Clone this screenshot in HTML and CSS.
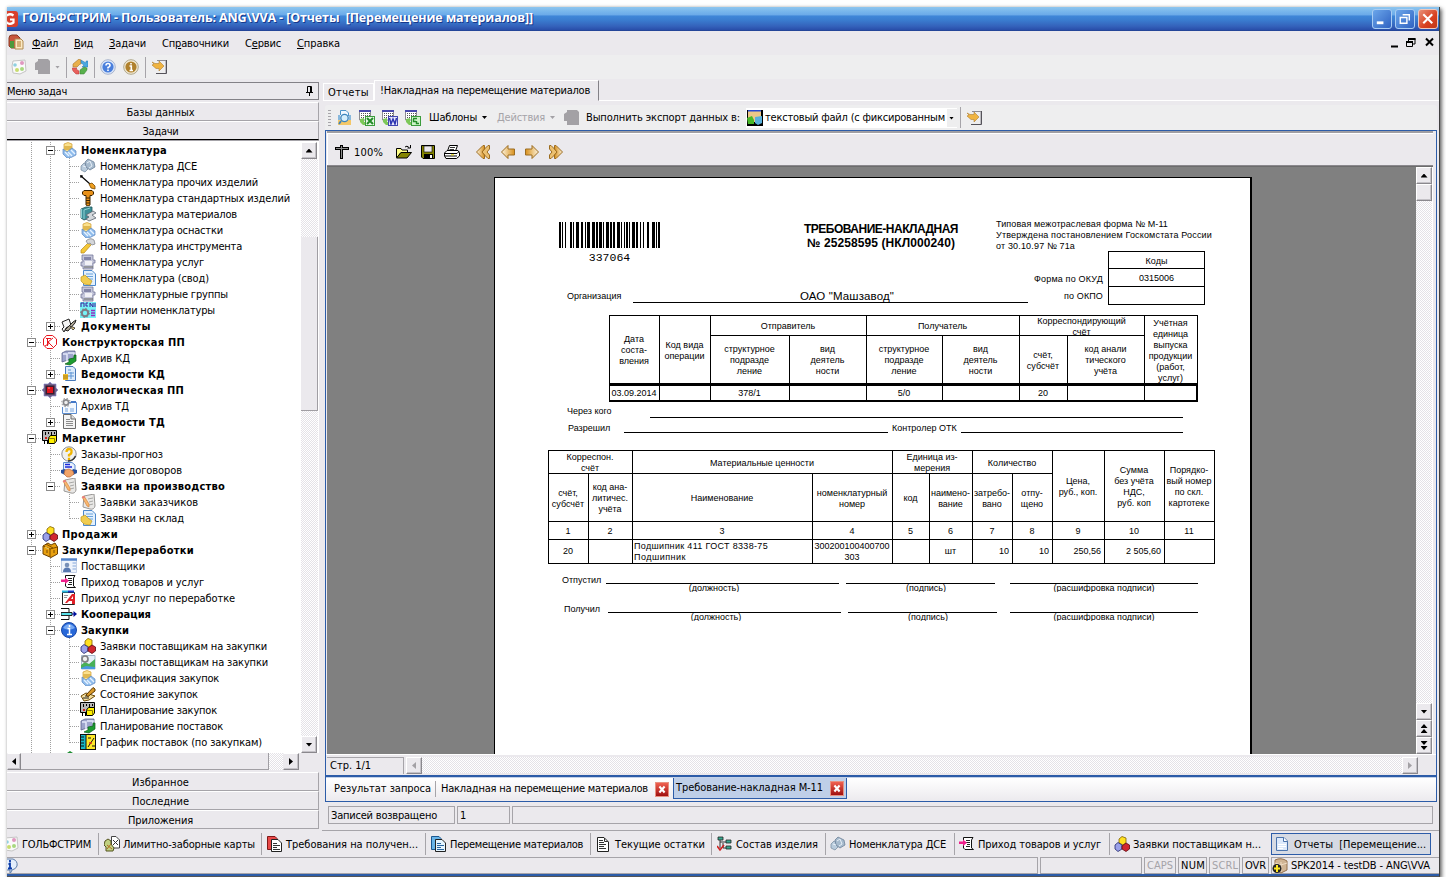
FILE: index.html
```html
<!DOCTYPE html>
<html lang="ru">
<head>
<meta charset="utf-8">
<title>ГОЛЬФСТРИМ</title>
<link rel="stylesheet" href="styles.css">
</head>
<body>
<svg class="defs" width="0" height="0">
<defs>
<linearGradient id="gold" x1="0" x2="1"><stop offset="0" stop-color="#fdf3dc"/><stop offset="1" stop-color="#d8901c"/></linearGradient>
<linearGradient id="gold2" x1="1" x2="0"><stop offset="0" stop-color="#fdf3dc"/><stop offset="1" stop-color="#d8901c"/></linearGradient>
<symbol id="app" viewBox="0 0 16 16"><rect width="16" height="16" rx="3" fill="#d8402c"/><path d="M11.5 4.5Q8 2 4.800 4.500T5 11.800Q8 14 11.500 11.500V8.500H8" fill="none" stroke="#fff" stroke-width="2.200"/></symbol>
<symbol id="appdoc" viewBox="0 0 16 16"><path d="M1 4Q1 1 4 1H9L12 4V14H3L1 12Z" fill="#c8563c" stroke="#8a3a22"/><path d="M2 7H6V14H2Z" fill="#4c9a3c"/><path d="M7 5H13L15 7V15H7Z" fill="#fbe9c4" stroke="#b08a50"/><path d="M9 8H13M9 10H13M9 12H13" stroke="#b0782c"/></symbol>
<symbol id="palette" viewBox="0 0 16 16"><path d="M2 2L14 1L15 12L9 15L2 14L1 7Z" fill="#fafafa" stroke="#c4c4c4"/><circle cx="4" cy="6" r="1.800" fill="#8fd0e0"/><circle cx="11" cy="4" r="2" fill="#e098c0"/><circle cx="6" cy="11" r="2" fill="#c8dc70"/><circle cx="11" cy="10" r="2" fill="#a8d880"/></symbol>
<symbol id="shade" viewBox="0 0 16 16"><path d="M4 0H14L16 2V15H4V11H1V4L4 2Z" fill="#a3a1a5"/></symbol>
<symbol id="recycle" viewBox="0 0 16 16"><path d="M7 0L1 5V8H5L8 5H9L9 1Z" fill="#e8b04c" stroke="#a8762c" stroke-width=".6"/><path d="M9 1L14 4V2H16V8H10L12 6L9 4Z" fill="#4aa8e0" stroke="#2878b0" stroke-width=".5"/><path d="M0 9H5L4 10L7 12V15H4L1 12Z" fill="#e8605c" stroke="#b83838" stroke-width=".5"/><path d="M15 9V11L12 15H8V11L12 8Z" fill="#58b04c" stroke="#388030" stroke-width=".5"/></symbol>
<symbol id="help" viewBox="0 0 16 16"><circle cx="8" cy="8" r="7.300" fill="#dbe7fa" stroke="#a9b4cc"/><circle cx="8" cy="8" r="5.600" fill="#4a7fdc"/><path d="M6 6.500Q6 4.500 8 4.500T10 6.400Q10 7.600 8 8.500V9.500M8 10.500V12" fill="none" stroke="#fff" stroke-width="1.600"/></symbol>
<symbol id="about" viewBox="0 0 16 16"><circle cx="8" cy="8" r="7.300" fill="#f2ead4" stroke="#b0a88c"/><circle cx="8" cy="8" r="5.600" fill="#b0812c"/><path d="M8 4V5.600M6.500 7H8.300V11M6.500 11.500H10" fill="none" stroke="#fff" stroke-width="1.600"/></symbol>
<symbol id="exit" viewBox="0 0 16 16"><path d="M5 1.500H14V14" fill="none" stroke="#8f8d92"/><path d="M14.500 1V14.500H4" fill="none" stroke="#55535a"/><path d="M0 3L3 4.500H7V2L12 7L7 12V9.500H4L0 6L2 5Z" fill="#f0b440" stroke="#b08030" stroke-width=".6"/></symbol>
<symbol id="can" viewBox="0 0 16 16"><path d="M3 2Q7-1 11 2V11H3Z" fill="#fbe08c" stroke="#d09c30" stroke-width=".7"/><path d="M3 4H11V8H3Z" fill="#e0b850"/><path d="M2 7L6 10L11 6L15 9V13L9 16H6L2 12Z" fill="#8fbcec" stroke="#5c86c0" stroke-width=".7"/><path d="M4 10L8 14M7 10L11 14M10 8L14 12" stroke="#e6f2ff" stroke-width="1.400"/></symbol>
<symbol id="nuts" viewBox="0 0 16 16"><path d="M1 8L4 5L8 7V11L5 14L1 12Z" fill="#b9cbdc" stroke="#71869b" stroke-width=".7"/><path d="M5 4L8 1L14 4L15 9L10 12L6 9Z" fill="#a6bacd" stroke="#61778f" stroke-width=".7"/><path d="M7 5L10 3L12 8L9 10M3 8L6 9" stroke="#e8f0f8" fill="none"/></symbol>
<symbol id="probe" viewBox="0 0 16 16"><path d="M1 2L10 10" stroke="#000" stroke-width="1.200"/><path d="M0 2H3M1 1V4" stroke="#000"/><path d="M9 10L12 9L15 12V15L11 14Z" fill="#f0a020" stroke="#7a4a00" stroke-width=".8"/></symbol>
<symbol id="bolt" viewBox="0 0 16 16"><path d="M4 .5H12L13.500 2V4L12 5.500H10V15L8 16L6 15V5.500H4L2.500 4V2Z" fill="#e89018" stroke="#3c2400"/><path d="M6 8H10M6 10.500H10M6 13H10" stroke="#3c2400"/></symbol>
<symbol id="plates" viewBox="0 0 16 16"><path d="M1 3L6 1L12 1V6L9 8V12L4 14L1 12Z" fill="#3d8f98" stroke="#1f555c" stroke-width=".8"/><path d="M4 4V13M4 4L10 2M1.500 3V12" stroke="#90d0d4"/><path d="M6 9L13 5L16 7L12 9L16 12L9 15L6 13L9 11Z" fill="#d4d8dc" stroke="#5c6470" stroke-width=".8"/></symbol>
<symbol id="hammer" viewBox="0 0 16 16"><path d="M1 12L8 5L11 7L4 15L1 15Z" fill="#f4c838" stroke="#b88818" stroke-width=".7"/><path d="M6 3Q10-1 14 2L15 6L12 7L10 5L8 6Z" fill="#d4d6da" stroke="#84888e" stroke-width=".8"/></symbol>
<symbol id="press" viewBox="0 0 16 16"><path d="M2 1H13V6H15V9H13V15H3V12H1V8H3V6H2Z" fill="#c4c6da" stroke="#74769a" stroke-width=".8"/><path d="M4 3H11V6H4Z" fill="#8486a8"/><path d="M5 8H12M5 10H12" stroke="#fff" stroke-width="1.400"/><path d="M4 13H13" stroke="#63655f"/></symbol>
<symbol id="svod" viewBox="0 0 16 16"><path d="M3.500 .5H12L15.500 4V15.500H3.500Z" fill="#e2f0fd" stroke="#4c88cc"/><path d="M6 4H13M6 6.500H13M6 9H13" stroke="#6aa2dc"/><path d="M1 7L5 5L8 8L12 11L10 15L4 14L1 11Z" fill="#f0cc50" stroke="#c09820" stroke-width=".7"/></symbol>
<symbol id="party" viewBox="0 0 16 16"><rect width="16" height="16" fill="#76f2f6"/><path d="M1 5V1H4V5M8 1H6V4H8M10 5V1L13 5V1M15 1V5" fill="none" stroke="#3c1c9c"/><circle cx="5" cy="11" r="3.200" fill="none" stroke="#7c7c84" stroke-width="2"/><circle cx="5" cy="11" r="4.500" fill="none" stroke="#7c7c84" stroke-dasharray="1.500 2"/><path d="M11 8.500H15M11 11H15M11 13.500H15" stroke="#9030c0" stroke-width="1.300"/></symbol>
<symbol id="docs" viewBox="0 0 16 16"><path d="M1 4L8 1L10 7L5 10L3 14L1 11L3 9Z" fill="#f4f4f4" stroke="#222"/><path d="M4 12L12 4L15 2L14 5L7 13Z" fill="#b0a898" stroke="#222"/><path d="M9 8L14 10L12 12Z" fill="#f4d890" stroke="#222" stroke-width=".8"/></symbol>
<symbol id="kredo" viewBox="0 0 16 16"><path d="M4.500 1.500H10.500L14.500 5V10.500L10.500 14.500H5L1.500 11V5Z" fill="none" stroke="#e8141c"/><path d="M5.500 4V12M11 4L6 8L11 13M4 4.500H9M3 12L8 9" fill="none" stroke="#e8141c"/></symbol>
<symbol id="archk" viewBox="0 0 16 16"><path d="M1 3L5 1H14V10H7L1 12Z" fill="#9da4cc" stroke="#5c628e" stroke-width=".8"/><path d="M2 4H6V11M7 3H13V6" stroke="#e4e8fa" fill="none" stroke-width="1.500"/><path d="M4 14L8 12V9L13 8V5H15V11L9 15Z" fill="#1c9c30" stroke="#0b5c18" stroke-width=".7"/></symbol>
<symbol id="vedk" viewBox="0 0 16 16"><path d="M4.500 .5H12L14.500 3V14.500H4.500Z" fill="#dcebfb" stroke="#4878b8"/><path d="M7 4H10M7 7H13M7 10H13M10 6V13" stroke="#5f95d4"/><path d="M2 8H7V14H2Z" fill="#f0c030"/><path d="M2 10H7M2 12H7" stroke="#a87c10"/></symbol>
<symbol id="tech" viewBox="0 0 16 16"><path d="M8 0L10 2H14V6L16 8L14 10V14H10L8 16L6 14H2V10L0 8L2 6V2H6Z" fill="#6e6088" stroke="#8080c4" stroke-width=".6"/><rect x="3.500" y="3.500" width="9" height="9" fill="#3c1c30"/><rect x="5" y="5" width="6" height="6" fill="#e0141c"/><path d="M6 6H8" stroke="#ff9090"/></symbol>
<symbol id="archt" viewBox="0 0 16 16"><path d="M3.500 4.500H15.500V15.500H1.500V9" fill="#f3f8fe" stroke="#5a8cd0"/><path d="M10 4H15" stroke="#4478c8" stroke-width="2"/><path d="M4 11H7M9 11H13M4 13H7M9 13H13" stroke="#78a4dc"/><circle cx="5" cy="4.500" r="2.600" fill="#eee" stroke="#86868a" stroke-width="1.600"/><circle cx="5" cy="4.500" r="4.200" fill="none" stroke="#86868a" stroke-dasharray="1.500 1.800"/></symbol>
<symbol id="page" viewBox="0 0 16 16"><path d="M2.500 .5H10L14.500 5V14.500H2.500Z" fill="#f4f4f4" stroke="#6c6c6c"/><path d="M10 .5V5H14.500" fill="#ddd" stroke="#6c6c6c"/><path d="M5 5.500H9M5 7.500H12M5 9.500H12M5 11.500H12" stroke="#8c8c8c"/></symbol>
<symbol id="market" viewBox="0 0 16 16"><path d="M.5 .5H14.500V10.500H.5Z" fill="#b8b8b8" stroke="#000"/><path d="M3.500 2V5M6.500 2V4M9.500 2V5M12.500 2V4M2.500 14V10M5.500 14V10" stroke="#000"/><path d="M3 7.500H5M3 8.500H5" stroke="#d02020"/><path d="M6.500 8L8.500 5.500H14.500V11L12.500 13.500H6.500Z" fill="#fff000" stroke="#000"/><path d="M6.500 8.500H12.500V13" fill="none" stroke="#8c7c00"/></symbol>
<symbol id="quest" viewBox="0 0 16 16"><circle cx="8" cy="8" r="7.200" fill="#f0f0ee" stroke="#8c8c90"/><path d="M14.500 10Q12 15 7 15" stroke="#333" fill="none" stroke-width="1.500"/><path d="M5.500 6Q5.500 3 8.200 3T10.500 6Q10.500 8 8 9V10.500M8 11.800V14" fill="none" stroke="#f0b400" stroke-width="2.300"/></symbol>
<symbol id="deal" viewBox="0 0 16 16"><path d="M2.500 .5H11L14 3V11H2.500Z" fill="#e8f0fc" stroke="#5c8cd0"/><path d="M4 2.500H9M4 5H11" stroke="#1c28d8" stroke-width="1.500"/><path d="M0 8L4 7L6 10L4 13L0 11ZM16 8L12 7L10 10L12 13L16 11Z" fill="#27509c"/><path d="M4 8L8 7L12 9L13 12L9 15H6L3 12Z" fill="#f2a468" stroke="#b8683c" stroke-width=".7"/></symbol>
<symbol id="note" viewBox="0 0 16 16"><path d="M4 2L14 0L15 12Q14 16 10 15L3 13Z" fill="#e9e8e6" stroke="#9a9896"/><path d="M8 5L13 4M9 8L13 7M9 11L13 10" stroke="#a8a8a6"/><path d="M2 3L4 2L9 10V13L7 12Z" fill="#f8b870" stroke="#d07830" stroke-width=".6"/><path d="M2 3L4 2L5 3.500L3 4.500Z" fill="#e87888"/></symbol>
<symbol id="cubes" viewBox="0 0 16 16"><path d="M5 3L8 .5L12 2V7L9 9L5 7Z" fill="#ffe020" stroke="#806000" stroke-width=".8"/><path d="M1 9L4 6.500L8 9V13L4 15.500L1 13Z" fill="#9aa0e8" stroke="#20246c" stroke-width=".8"/><path d="M8 10L12 7L15.500 9V13L12 15.500L8 13Z" fill="#d02830" stroke="#5c0810" stroke-width=".8"/></symbol>
<symbol id="box" viewBox="0 0 16 16"><path d="M1 4L6 1L9 3L13 1L15.500 5V12L9 15.500L1 12Z" fill="#e8a010" stroke="#6c4000"/><path d="M1 4L8 7L15.500 5M8 7V15M4 2L11 6M5 8V11M12 8V11" fill="none" stroke="#7c4c00"/><path d="M3 5L7 7" stroke="#ffe070"/></symbol>
<symbol id="supp" viewBox="0 0 16 16"><path d="M.5 1.500H15.500V14.500H.5Z" fill="#eef3fb" stroke="#c0cde4"/><path d="M0 1.500H16" stroke="#5484cc" stroke-width="2.500"/><circle cx="6" cy="7" r="2.300" fill="#7890b8"/><path d="M2 14Q2 9.500 6 9.500T10 14Z" fill="#5878b0"/><path d="M11.500 5H15M11.500 8H15M11.500 11H15" stroke="#86a8dc"/></symbol>
<symbol id="income" viewBox="0 0 16 16"><path d="M4.500 4V1.500H14L12.500 4V12L14.500 13.500H6L4.500 12V9" fill="#fff" stroke="#111"/><path d="M7 4.500H11M7 6.500H11M8 8.500H11M7 10.500H11" stroke="#222"/><path d="M0 5.500H4V3.500L8 6.800L4 10V8H0Z" fill="#f0208c"/></symbol>
<symbol id="letterA" viewBox="0 0 16 16"><path d="M1.500 2.500H13.500V14.500H1.500Z" fill="#fff" stroke="#222"/><path d="M1 1.500H7" stroke="#28b8e0" stroke-width="2"/><path d="M7 1.500H13" stroke="#1838c8" stroke-width="2"/><path d="M4 13L11 4H14V14H11V11H8L6 13Z" fill="#e02028"/><path d="M10 9L12 6V9Z" fill="#fff"/><path d="M3 5.500H7M3 7.500H6" stroke="#999"/></symbol>
<symbol id="coop" viewBox="0 0 16 16"><path d="M0 2.500H8V13.500H0" fill="none" stroke="#111"/><path d="M0 6.500H11V9.500H0Z" fill="#58e0e8" stroke="#222"/><path d="M11 8H13" stroke="#00109c"/><path d="M12.500 5L16 8L12.500 11Z" fill="#00109c"/></symbol>
<symbol id="info" viewBox="0 0 16 16"><circle cx="8" cy="8" r="7.500" fill="#2868d8" stroke="#1a48a8"/><path d="M2 6Q8-2 14 6Q8 9 2 6Z" fill="#78aaf4"/><path d="M8.500 3V5M6.500 6.500H8.500V12M6 12.500H11" fill="none" stroke="#fff" stroke-width="1.500"/></symbol>
<symbol id="orders" viewBox="0 0 16 16"><path d="M1.500 1.500H15V15H1.500Z" fill="#e4f0fa" stroke="#a4b8cc"/><path d="M1 15V11L5 8L9 10L15 5V15Z" fill="#48b058"/><path d="M1 14L6 12L15 13V15H1Z" fill="#4898e0"/><circle cx="5" cy="5" r="3" fill="#f0f0f0" stroke="#808084" stroke-width="1.700"/></symbol>
<symbol id="state" viewBox="0 0 16 16"><path d="M1 10L6 7L15 10L9 14L4 15Z" fill="#f6e0a0" stroke="#6c4a08"/><path d="M3 12H9M5 10H9" stroke="#222"/><path d="M6 9L13 1.500L15 3V5L8 10.500Z" fill="#d89828" stroke="#5c3800"/></symbol>
<symbol id="chart" viewBox="0 0 16 16"><rect x=".5" y=".5" width="15" height="15" fill="#ffe828" stroke="#111"/><path d="M1 1H6V15H1Z" fill="#18b8c8"/><path d="M1 3H4M1 6H4M1 9H4M1 12H4M6 0V16" stroke="#111"/><path d="M8 13L14 4M8 4H11M12 12H15" stroke="#111"/><path d="M9 9L12 9" stroke="#e03020" stroke-width="1.500"/></symbol>
<symbol id="preview" viewBox="0 0 16 16"><path d="M4.500 5V.5H10L12.500 3V6" fill="#f0f8ff" stroke="#4c94c8"/><path d="M2 5H4V11H2ZM13 5H15V11H13Z" fill="#88b8dc"/><path d="M2 10H15V15H2Z" fill="#f4c868"/><circle cx="8.500" cy="8" r="3.700" fill="#d4eefc" stroke="#3c84bc" stroke-width="1.300"/><path d="M5 11L3 14" stroke="#3c84bc" stroke-width="1.800"/></symbol>
<symbol id="sheet" viewBox="0 0 16 16"><path d="M.5 .5H11.500V10H.5Z" fill="#fff" stroke="#8c8c90"/><path d="M0 1H12" stroke="#4848ac" stroke-width="2"/><path d="M2 3.500H11M2 5.500H11M2 7.500H11" stroke="#555" stroke-dasharray="1 1"/><path d="M1 9L5 8V12H8V15H4L1 12Z" fill="#7cc858"/></symbol>
<symbol id="xls" viewBox="0 0 16 16"><use href="#sheet"/><rect x="6.500" y="6.500" width="9" height="9" fill="#e8f8e4" stroke="#3c9c3c"/><path d="M8 8L14 14M14 8L8 14" stroke="#248c28" stroke-width="2"/></symbol>
<symbol id="doc" viewBox="0 0 16 16"><use href="#sheet"/><rect x="6.500" y="6.500" width="9" height="9" fill="#e8e8fc" stroke="#4448b0"/><path d="M7.500 8L9 14L11 9L13 14L14.500 8" fill="none" stroke="#2c34b0" stroke-width="1.500"/></symbol>
<symbol id="xml" viewBox="0 0 16 16"><use href="#sheet"/><rect x="6.500" y="6.500" width="9" height="9" fill="#d0f4c8" stroke="#3c9c3c"/><path d="M8 8.500H12M8.500 9V11.500H11M11.500 11V13.500H14" fill="none" stroke="#248c28" stroke-width="1.400"/></symbol>
<symbol id="txt" viewBox="0 0 16 16"><rect width="16" height="16" fill="#000"/><path d="M1 1H14V12H1Z" fill="#ecc888"/><path d="M1 0H14V1.500H1Z" fill="#2848d0"/><path d="M0 8L5 6L7 10V14H1Z" fill="#48b828"/><path d="M8 7L15 6V13L11 15L8 13Z" fill="#58b0dc"/></symbol>
<symbol id="zoomcross" viewBox="0 0 16 16"><path d="M0 3H14V6H0ZM5 1H8V15H5Z" fill="#000"/><path d="M1 4.500H13M6.500 2V14" stroke="#8c8c8c"/></symbol>
<symbol id="open" viewBox="0 0 16 16"><path d="M.5 13.500V4.500H5L6 6H11.500V8.500H5L1 13.500" fill="#ffff88" stroke="#000"/><path d="M.5 14L5 8.500H15.500L11 14Z" fill="#848400" stroke="#000"/><path d="M9 3Q11 1 13 3.500M14.500 1V4H11.500" fill="none" stroke="#000"/></symbol>
<symbol id="save" viewBox="0 0 16 16"><path d="M1.500 1.500H14.500V14.500H3L1.500 13Z" fill="#848400" stroke="#000"/><rect x="4" y="2" width="8" height="6" fill="#ebe9ed" stroke="#000" stroke-width=".6"/><rect x="4" y="10" width="9" height="4.500" fill="#000"/><rect x="10" y="11" width="2" height="3" fill="#fff"/></symbol>
<symbol id="print" viewBox="0 0 16 16"><path d="M5.500 1.500H13.500L11.500 7H3.500Z" fill="#fff" stroke="#000"/><path d="M6 3.500H11M5.500 5.500H10" stroke="#000" stroke-width=".8"/><path d="M.5 9L3 6.500H14L15.500 9V12L12.500 14.500H2L.5 12Z" fill="#fff" stroke="#000"/><path d="M1 9.500H13L15 7.500M1 12H13" stroke="#000" fill="none"/><path d="M7 10.800H10" stroke="#e8d800"/></symbol>
<symbol id="prev" viewBox="0 0 16 16"><path d="M8 1.500L1.500 8L8 14.500V11H14.500V5H8Z" fill="url(#gold)" stroke="#9c6c20"/></symbol>
<symbol id="next" viewBox="0 0 16 16"><path d="M8 1.500L14.500 8L8 14.500V11H1.500V5H8Z" fill="url(#gold2)" stroke="#9c6c20"/></symbol>
<symbol id="first" viewBox="0 0 16 16"><path d="M12 1.500L5.500 8L12 14.500H13.500V11L11 8L13.500 5V1.500Z" fill="#ecc070" stroke="#9c6c20"/><path d="M7 1.500L.5 8L7 14.500H8.500V11L6 8L8.500 5V1.500Z" fill="url(#gold)" stroke="#9c6c20"/></symbol>
<symbol id="last" viewBox="0 0 16 16"><path d="M3 1.500L9.500 8L3 14.500H1.500V11L4 8L1.500 5V1.500Z" fill="#ecc070" stroke="#9c6c20"/><path d="M8 1.500L14.500 8L8 14.500H6.500V11L9 8L6.500 5V1.500Z" fill="url(#gold2)" stroke="#9c6c20"/></symbol>
<symbol id="limit" viewBox="0 0 16 16"><path d="M7.500 .5H12L15.500 4V12H7.500Z" fill="#fff" stroke="#444"/><path d="M9 4L14 9M14 4L9 9" stroke="#333"/><path d="M1 5L4 3L7 5V8L10 12L9 15H2V11L0 9Z" fill="#c0d080" stroke="#555420"/><path d="M3 9L8 13M7 8L3 13" stroke="#b06c20"/></symbol>
<symbol id="reqs" viewBox="0 0 16 16"><path d="M.5 .5H8L10 2.500V13.500H.5Z" fill="#e84848" stroke="#801818"/><path d="M4.500 3.500H11L14.500 7V15.500H4.500Z" fill="#fff" stroke="#222"/><path d="M6 7.500H10M6 9.500H13M6 11.500H10M6 13.500H13" stroke="#333"/></symbol>
<symbol id="moves" viewBox="0 0 16 16"><path d="M.5 .5H8L10 2.500V13.500H.5Z" fill="#68b4e8" stroke="#1c5890"/><path d="M4.500 3.500H11L14.500 7V15.500H4.500Z" fill="#e4f4ff" stroke="#222"/><path d="M6 7.500H10M6 9.500H13M6 11.500H10M6 13.500H13" stroke="#2864a0"/></symbol>
<symbol id="rest" viewBox="0 0 16 16"><path d="M1.500 1.500H8L12.500 6V15.500H1.500Z" fill="#fff" stroke="#222"/><path d="M3 4.500H7M3 6.500H8M3 8.500H10M3 10.500H8M3 12.500H10M8.500 2V5.500H12" fill="none" stroke="#333"/></symbol>
<symbol id="struct" viewBox="0 0 16 16"><path d="M1 1H6V4H1ZM9 4H14V7H9ZM9 10H14V13H9Z" fill="#38a890" stroke="#222" stroke-width=".8"/><path d="M3 4V12M3 6H9M6 7V12H9" fill="none" stroke="#333"/><path d="M0 10L3 14L7 9" fill="none" stroke="#d02020" stroke-width="1.600"/></symbol>
<symbol id="report" viewBox="0 0 16 16"><path d="M1.500 1.500H9L12.500 5V14.500H1.500Z" fill="#dce9fb" stroke="#4c74ac"/><path d="M8.500 1.500V5.500H12.500" fill="#fff" stroke="#4c74ac"/><path d="M3 8.500H11M3 10.500H11M3 12.500H8" stroke="#fff"/></symbol>
<symbol id="dbase" viewBox="0 0 16 16"><path d="M3 2Q9-1 15 3V12L9 15L3 12Z" fill="#d0b494" stroke="#94704c"/><path d="M9 4V14M3 5L9 7L15 5" stroke="#f0dcc4" fill="none"/><circle cx="5" cy="10.500" r="4.500" fill="#222"/><path d="M5 7V14M2 10.500H8" stroke="#ffe820" stroke-width="2"/></symbol>
<symbol id="hint" viewBox="0 0 16 16"><path d="M2 1H10Q15 3 14 8Q13 11 9 12L7 16V12H0V1Z" fill="#e4eefc" stroke="#5c7ca8"/><path d="M7 2V4.500M5.500 6H7V10M5 10.500H9" fill="none" stroke="#0c3ca8" stroke-width="1.800"/></symbol>
<symbol id="pin" viewBox="0 0 16 16"><path d="M5.500 3.500H9.500V9.500H5.500ZM8.500 4V9M4 9.500H11M7.500 10V13" fill="none" stroke="#000"/></symbol>
</defs>
</svg>

<div class="win">
  <header class="title">
    <svg class="i appicon"><use href="#app"/></svg>
    <span class="t cap" data-w="511">ГОЛЬФСТРИМ - Пользователь: ANG\VVA - [Отчеты  [Перемещение материалов]]</span>
    <div class="wbtns">
      <span class="wb"><svg viewBox="0 0 19 19"><path d="M4 13.500H11" stroke="#fff" stroke-width="3"/></svg></span>
      <span class="wb"><svg viewBox="0 0 19 19"><path d="M7 5H14V11M4.500 8H11.500V14H4.500Z" fill="none" stroke="#fff" stroke-width="1.500"/></svg></span>
      <span class="wb red"><svg viewBox="0 0 19 19"><path d="M4.500 4.500L14 14M14 4.500L4.500 14" stroke="#fff" stroke-width="2.200"/></svg></span>
    </div>
  </header>

  <nav class="menu">
    <svg class="i"><use href="#appdoc"/></svg>
    <span class="t" data-w="26"><u>Ф</u>айл</span><span class="t" data-w="19"><u>В</u>ид</span><span class="t" data-w="37"><u>З</u>адачи</span><span class="t" data-w="67">Сп<u>р</u>авочники</span><span class="t" data-w="36">С<u>е</u>рвис</span><span class="t" data-w="43"><u>С</u>правка</span>
    <svg class="mdi" viewBox="0 0 44 12"><path d="M0 9.500H7" stroke="#000" stroke-width="2"/><path d="M17.500 4V1.500H24V7H22M15.500 5H21.500V9.500H15.500Z" fill="none" stroke="#000"/><path d="M17 2H24.500M15 5H22" stroke="#000" stroke-width="2"/><path d="M35 1.500L42 8.500M42 1.500L35 8.500" stroke="#000" stroke-width="2"/></svg>
  </nav>

  <div class="tools">
    <svg class="i"><use href="#palette"/></svg>
    <svg class="i m7"><use href="#shade"/></svg>
    <i class="dn off m5"></i>
    <i class="sep m6"></i>
    <svg class="i m5"><use href="#recycle"/></svg>
    <i class="sep m6"></i>
    <svg class="i m5"><use href="#help"/></svg>
    <svg class="i m7"><use href="#about"/></svg>
    <i class="sep m6"></i>
    <svg class="i m6"><use href="#exit"/></svg>
  </div>

  <main class="main">
    <aside class="side">
      <div class="side-head"><span class="t" data-w="60">Меню задач</span><svg class="i"><use href="#pin"/></svg></div>
      <div class="bar"><span class="t" data-w="68">Базы данных</span></div>
      <div class="bar cur"><span class="t" data-w="36">Задачи</span></div>
      <div class="treebox">
        <ul class="tree">
          <li class="b"><i class="v"></i><i class="k"><b class="x m"></b></i><svg class="i"><use href="#can"/></svg><span class="t" data-w="86">Номенклатура</span></li>
          <li><i class="v"></i><i class="v"></i><i class="k"></i><svg class="i"><use href="#nuts"/></svg><span class="t" data-w="97">Номенклатура ДСЕ</span></li>
          <li><i class="v"></i><i class="v"></i><i class="k"></i><svg class="i"><use href="#probe"/></svg><span class="t" data-w="158">Номенклатура прочих изделий</span></li>
          <li><i class="v"></i><i class="v"></i><i class="k"></i><svg class="i"><use href="#bolt"/></svg><span class="t" data-w="190">Номенклатура стандартных изделий</span></li>
          <li><i class="v"></i><i class="v"></i><i class="k"></i><svg class="i"><use href="#plates"/></svg><span class="t" data-w="137">Номенклатура материалов</span></li>
          <li><i class="v"></i><i class="v"></i><i class="k"></i><svg class="i"><use href="#can"/></svg><span class="t" data-w="123">Номенклатура оснастки</span></li>
          <li><i class="v"></i><i class="v"></i><i class="k"></i><svg class="i"><use href="#hammer"/></svg><span class="t" data-w="142">Номенклатура инструмента</span></li>
          <li><i class="v"></i><i class="v"></i><i class="k"></i><svg class="i"><use href="#press"/></svg><span class="t" data-w="104">Номенклатура услуг</span></li>
          <li><i class="v"></i><i class="v"></i><i class="k"></i><svg class="i"><use href="#svod"/></svg><span class="t" data-w="109">Номенклатура (свод)</span></li>
          <li><i class="v"></i><i class="v"></i><i class="k"></i><svg class="i"><use href="#press"/></svg><span class="t" data-w="128">Номенклатурные группы</span></li>
          <li><i class="v"></i><i class="v"></i><i class="k l"></i><svg class="i"><use href="#party"/></svg><span class="t" data-w="115">Партии номенклатуры</span></li>
          <li class="b"><i class="v"></i><i class="k l"><b class="x"></b></i><svg class="i"><use href="#docs"/></svg><span class="t" data-w="70">Документы</span></li>
          <li class="b"><i class="k"><b class="x m"></b></i><svg class="i"><use href="#kredo"/></svg><span class="t" data-w="123">Конструкторская ПП</span></li>
          <li><i class="v"></i><i class="k"></i><svg class="i"><use href="#archk"/></svg><span class="t" data-w="49">Архив КД</span></li>
          <li class="b"><i class="v"></i><i class="k l"><b class="x"></b></i><svg class="i"><use href="#vedk"/></svg><span class="t" data-w="84">Ведомости КД</span></li>
          <li class="b"><i class="k"><b class="x m"></b></i><svg class="i"><use href="#tech"/></svg><span class="t" data-w="122">Технологическая ПП</span></li>
          <li><i class="v"></i><i class="k"></i><svg class="i"><use href="#archt"/></svg><span class="t" data-w="48">Архив ТД</span></li>
          <li class="b"><i class="v"></i><i class="k l"><b class="x"></b></i><svg class="i"><use href="#page"/></svg><span class="t" data-w="84">Ведомости ТД</span></li>
          <li class="b"><i class="k"><b class="x m"></b></i><svg class="i"><use href="#market"/></svg><span class="t" data-w="64">Маркетинг</span></li>
          <li><i class="v"></i><i class="k"></i><svg class="i"><use href="#quest"/></svg><span class="t" data-w="82">Заказы-прогноз</span></li>
          <li><i class="v"></i><i class="k"></i><svg class="i"><use href="#deal"/></svg><span class="t" data-w="101">Ведение договоров</span></li>
          <li class="b"><i class="v"></i><i class="k l"><b class="x m"></b></i><svg class="i"><use href="#note"/></svg><span class="t" data-w="144">Заявки на производство</span></li>
          <li><i class="v"></i><i></i><i class="k"></i><svg class="i"><use href="#note"/></svg><span class="t" data-w="98">Заявки заказчиков</span></li>
          <li><i class="v"></i><i></i><i class="k l"></i><svg class="i"><use href="#svod"/></svg><span class="t" data-w="84">Заявки на склад</span></li>
          <li class="b"><i class="k"><b class="x"></b></i><svg class="i"><use href="#cubes"/></svg><span class="t" data-w="56">Продажи</span></li>
          <li class="b"><i class="k"><b class="x m"></b></i><svg class="i"><use href="#box"/></svg><span class="t" data-w="132">Закупки/Переработки</span></li>
          <li><i class="v"></i><i class="k"></i><svg class="i"><use href="#supp"/></svg><span class="t" data-w="64">Поставщики</span></li>
          <li><i class="v"></i><i class="k"></i><svg class="i"><use href="#income"/></svg><span class="t" data-w="123">Приход товаров и услуг</span></li>
          <li><i class="v"></i><i class="k"></i><svg class="i"><use href="#letterA"/></svg><span class="t" data-w="154">Приход услуг по переработке</span></li>
          <li class="b"><i class="v"></i><i class="k"><b class="x"></b></i><svg class="i"><use href="#coop"/></svg><span class="t" data-w="70">Кооперация</span></li>
          <li class="b"><i class="v"></i><i class="k"><b class="x m"></b></i><svg class="i"><use href="#info"/></svg><span class="t" data-w="48">Закупки</span></li>
          <li><i class="v"></i><i class="v"></i><i class="k"></i><svg class="i"><use href="#cubes"/></svg><span class="t" data-w="167">Заявки поставщикам на закупки</span></li>
          <li><i class="v"></i><i class="v"></i><i class="k"></i><svg class="i"><use href="#orders"/></svg><span class="t" data-w="168">Заказы поставщикам на закупки</span></li>
          <li><i class="v"></i><i class="v"></i><i class="k"></i><svg class="i"><use href="#can"/></svg><span class="t" data-w="119">Спецификация закупок</span></li>
          <li><i class="v"></i><i class="v"></i><i class="k"></i><svg class="i"><use href="#state"/></svg><span class="t" data-w="98">Состояние закупок</span></li>
          <li><i class="v"></i><i class="v"></i><i class="k"></i><svg class="i"><use href="#market"/></svg><span class="t" data-w="117">Планирование закупок</span></li>
          <li><i class="v"></i><i class="v"></i><i class="k"></i><svg class="i"><use href="#archk"/></svg><span class="t" data-w="123">Планирование поставок</span></li>
          <li><i class="v"></i><i class="v"></i><i class="k l"></i><svg class="i"><use href="#chart"/></svg><span class="t" data-w="162">График поставок (по закупкам)</span></li>
          <li><i class="v"></i><i class="v"></i><svg class="i" viewBox="0 0 16 16"><path d="M6 3L9 1L12 3Z" fill="#1c8c30"/></svg></li>
        </ul>
        <div class="vsb"><span class="sb"><i class="up"></i></span><span class="fill a"></span><span class="thumb"></span><span class="fill"></span><span class="sb"><i class="down"></i></span></div>
      </div>
      <div class="hsb"><span class="sb flat"><i class="left"></i></span><span class="thumb"></span><span class="fill"></span><span class="sb flat"><i class="right"></i></span></div>
      <div class="bar b2"><span class="t" data-w="57">Избранное</span></div>
      <div class="bar b2"><span class="t" data-w="57">Последние</span></div>
      <div class="bar b2"><span class="t" data-w="65">Приложения</span></div>
    </aside>

    <section class="work">
      <div class="tabs">
        <span class="tab"><span class="t" data-w="41">Отчеты</span></span>
        <span class="tab on"><span class="t" data-w="210">!Накладная на перемещение материалов</span></span>
        <span class="tabline"></span>
      </div>
      <div class="rtools">
        <i class="grip"></i>
        <svg class="i m5"><use href="#preview"/></svg>
        <svg class="i m7"><use href="#xls"/></svg>
        <svg class="i m7"><use href="#doc"/></svg>
        <svg class="i m7"><use href="#xml"/></svg>
        <span class="t m8" data-w="48">Шаблоны</span><i class="dn m5"></i>
        <span class="t m10 dis" data-w="48">Действия</span><i class="dn off m5"></i>
        <svg class="i m8"><use href="#shade"/></svg>
        <span class="t m7" data-w="154">Выполнить экспорт данных в:</span>
        <span class="combo m6"><svg class="i"><use href="#txt"/></svg><span class="t" data-w="180">текстовый файл (с фиксированным</span><i class="cbtn"><i class="dn"></i></i></span>
        <i class="sep m3"></i>
        <svg class="i m6"><use href="#exit"/></svg>
      </div>
      <div class="viewer">
        <div class="vtools">
          <svg class="i"><use href="#zoomcross"/></svg><span class="t m3" data-w="29">100%</span>
          <svg class="i m13"><use href="#open"/></svg>
          <svg class="i m8"><use href="#save"/></svg>
          <svg class="i m8"><use href="#print"/></svg>
          <svg class="i m16"><use href="#first"/></svg>
          <svg class="i m8"><use href="#prev"/></svg>
          <svg class="i m8"><use href="#next"/></svg>
          <svg class="i m8"><use href="#last"/></svg>
        </div>
        <div class="canvas">
          <article class="paper">
            <div class="ha">
              <div class="barcode">
                <svg width="101" height="26" viewBox="0 0 101 26" shape-rendering="crispEdges"><path d="M0 0h2v26h-2zM3 0h1v26h-1zM6 0h1v26h-1zM11 0h2v26h-2zM14 0h1v26h-1zM17 0h3v26h-3zM22 0h2v26h-2zM26 0h1v26h-1zM28 0h3v26h-3zM33 0h3v26h-3zM37 0h2v26h-2zM40 0h3v26h-3zM44 0h1v26h-1zM47 0h3v26h-3zM51 0h2v26h-2zM54 0h2v26h-2zM58 0h3v26h-3zM62 0h1v26h-1zM65 0h1v26h-1zM67 0h2v26h-2zM70 0h1v26h-1zM73 0h3v26h-3zM77 0h2v26h-2zM81 0h1v26h-1zM84 0h1v26h-1zM88 0h2v26h-2zM93 0h3v26h-3zM97 0h1v26h-1zM99 0h2v26h-2z"/></svg>
                <span class="num">337064</span>
              </div>
              <h1><span class="t" data-w="154">ТРЕБОВАНИЕ-НАКЛАДНАЯ</span><br><span class="t" data-w="148">№ 25258595 (НКЛ000240)</span></h1>
              <div class="form"><span class="t" data-w="172">Типовая межотраслевая форма № М-11</span><br><span class="t" data-w="216">Утверждена постановлением Госкомстата России</span><br><span class="t" data-w="79">от 30.10.97 № 71а</span></div>
            </div>
            <div class="hb">
              <span class="org">Организация</span>
              <span class="orgline"><span class="t" data-w="94">ОАО "Машзавод"</span></span>
              <div class="okl"><span class="t" data-w="69">Форма по ОКУД</span><span class="t" data-w="39">по ОКПО</span></div>
              <div class="codes"><div>Коды</div><div>0315006</div><div></div></div>
            </div>
            <div class="g1">
              <div class="r2">Дата<br>соста-<br>вления</div><div class="r2">Код вида<br>операции</div><div class="c2">Отправитель</div><div class="c2">Получатель</div><div class="c2"><span>Корреспондирующий<br>счёт</span></div><div class="r2">Учётная<br>единица<br>выпуска<br>продукции<br>(работ,<br>услуг)</div>
              <div>структурное<br>подразде<br>ление</div><div>вид<br>деятель<br>ности</div><div>структурное<br>подразде<br>ление</div><div>вид<br>деятель<br>ности</div><div>счёт,<br>субсчёт</div><div>код анали<br>тического<br>учёта</div>
              <div class="th">03.09.2014</div><div class="th"></div><div class="th">378/1</div><div class="th"></div><div class="th">5/0</div><div class="th"></div><div class="th">20</div><div class="th"></div><div class="th"></div>
            </div>
            <div class="via"><span class="l1">Через кого</span><i class="u1"></i></div>
            <div class="via two"><span class="l2">Разрешил</span><i class="u2"></i><span class="l3">Контролер ОТК</span><i class="u3"></i></div>
            <div class="g2">
              <div class="c2">Корреспон.<br>счёт</div><div class="c2">Материальные ценности</div><div class="c2">Единица из-<br>мерения</div><div class="c2">Количество</div><div class="r2">Цена,<br>руб., коп.</div><div class="r2">Сумма<br>без учёта<br>НДС,<br>руб. коп</div><div class="r2">Порядко-<br>вый номер<br>по скл.<br>картотеке</div>
              <div>счёт,<br>субсчёт</div><div>код ана-<br>литичес.<br>учёта</div><div>Наименование</div><div>номенклатурный<br>номер</div><div>код</div><div>наимено-<br>вание</div><div>затребо-<br>вано</div><div>отпу-<br>щено</div>
              <div>1</div><div>2</div><div>3</div><div>4</div><div>5</div><div>6</div><div>7</div><div>8</div><div>9</div><div>10</div><div>11</div>
              <div class="d">20</div><div class="d"></div><div class="d lf"><span class="t" data-w="134">Подшипник 411 ГОСТ 8338-75</span><span class="t" data-w="52">Подшипник</span></div><div class="d">300200100400700<br>303</div><div class="d"></div><div class="d">шт</div><div class="d rt">10</div><div class="d rt">10</div><div class="d rt">250,56</div><div class="d rt">2 505,60</div><div class="d"></div>
            </div>
            <div class="sign"><span class="s0">Отпустил</span><span class="s1">(должность)</span><span class="s2">(подпись)</span><span class="s3">(расшифровка подписи)</span></div>
            <div class="sign second"><span class="s0">Получил</span><span class="s1">(должность)</span><span class="s2">(подпись)</span><span class="s3">(расшифровка подписи)</span></div>
          </article>
          <div class="rsb"><span class="sb"><i class="up"></i></span><span class="sb"></span><span class="fill"></span><span class="sb"><i class="down"></i></span><span class="sb"><i class="up"></i><i class="up"></i></span><span class="sb"><i class="down"></i><i class="down"></i></span></div>
        </div>
        <div class="vfoot"><span class="pg"><span class="t" data-w="41">Стр. 1/1</span></span><span class="sb"><i class="left off"></i></span><span class="fill"></span><span class="sb"><i class="right off"></i></span></div>
      </div>
      <div class="btabs">
        <span class="t first" data-w="97">Результат запроса</span><i class="bs"></i>
        <span class="t" data-w="207">Накладная на перемещение материалов</span><span class="cl"><svg viewBox="0 0 14 14"><path d="M4 3.500L10 10.500M10 3.500L4 10.500" stroke="#fff" stroke-width="2.400"/></svg></span>
        <span class="bt"><span class="t" data-w="147">Требование-накладная М-11</span><span class="cl"><svg viewBox="0 0 14 14"><path d="M4 3.500L10 10.500M10 3.500L4 10.500" stroke="#fff" stroke-width="2.400"/></svg></span></span>
      </div>
      <div class="cells"><span><span class="t" data-w="106">Записей возвращено</span></span><span>1</span><span></span></div>
    </section>
  </main>

  <div class="task">
    <span class="k0"><svg class="i"><use href="#palette"/></svg><span class="t" data-w="69">ГОЛЬФСТРИМ</span></span>
    <span class="k1"><svg class="i"><use href="#limit"/></svg><span class="t" data-w="132">Лимитно-заборные карты</span></span>
    <span class="k2"><svg class="i"><use href="#reqs"/></svg><span class="t" data-w="132">Требования на получен...</span></span>
    <span class="k3"><svg class="i"><use href="#moves"/></svg><span class="t" data-w="133">Перемещение материалов</span></span>
    <span class="k4"><svg class="i"><use href="#rest"/></svg><span class="t" data-w="90">Текущие остатки</span></span>
    <span class="k5"><svg class="i"><use href="#struct"/></svg><span class="t" data-w="82">Состав изделия</span></span>
    <span class="k6"><svg class="i"><use href="#nuts"/></svg><span class="t" data-w="97">Номенклатура ДСЕ</span></span>
    <span class="k7"><svg class="i"><use href="#income"/></svg><span class="t" data-w="123">Приход товаров и услуг</span></span>
    <span class="k8"><svg class="i"><use href="#cubes"/></svg><span class="t" data-w="128">Заявки поставщикам н...</span></span>
    <span class="k9"><svg class="i"><use href="#report"/></svg><span class="t" data-w="132">Отчеты  [Перемещение...</span></span>
  </div>
  <footer class="status">
    <span class="q0"><svg class="i"><use href="#hint"/></svg></span><span class="q1"></span><span class="q2 dis"><span class="t" data-w="26">CAPS</span></span><span class="q3"><span class="t" data-w="24">NUM</span></span><span class="q4 dis"><span class="t" data-w="26">SCRL</span></span><span class="q5"><span class="t" data-w="21">OVR</span></span><span class="q6"><svg class="i"><use href="#dbase"/></svg><span class="t" data-w="139">SPK2014 - testDB - ANG\VVA</span></span>
  </footer>
</div>
<script src="fit.js"></script>
</body>
</html>
```
FILE: styles.css
```css
* { box-sizing: border-box; }
body { margin: 0; background: #fff; overflow: hidden; font: 11px/14px "DejaVu Sans Condensed", "DejaVu Sans", sans-serif; font-stretch: condensed; color: #000; }
.defs { position: absolute; }
i { font-style: normal; display: block; flex: none; }
.t { display: inline-block; white-space: pre; flex: none; }
.tree .t, .menu .t, .bar .t, .task .t, .side-head .t { padding-top: 2px; }
.i { width: 16px; height: 16px; flex: none; display: block; }
.m3 { margin-left: 3px; } .m5 { margin-left: 5px; } .m6 { margin-left: 6px; } .m7 { margin-left: 7px; } .m8 { margin-left: 8px; }
.m10 { margin-left: 10px; } .m13 { margin-left: 13px; } .m16 { margin-left: 16px; }
.dis { color: #a5a3a8; }

.win { width: 1433px; height: 870px; margin: 7px 0 0 7px; background: #ebe9ed; display: flex; flex-direction: column; border-right: 1px solid #404040; border-bottom: 1px solid #555; box-shadow: 2px 2px 4px rgba(0,0,0,.55), 0 0 3px rgba(0,0,0,.2); }

.title { height: 24px; flex: none; display: flex; align-items: center; overflow: hidden; background: linear-gradient(#8fc6ee 0, #76b5ec 20%, #6cabe9 32%, #3f86d8 38%, #3a7ccf 55%, #3462bb 80%, #2a50ab 94%, #22408f 100%); }
.appicon { margin-left: -5px; }
.cap { margin: -2px 0 0 4px; color: #fff; font: bold 12.500px/18px "Open Sans", "Noto Sans", sans-serif; font-stretch: normal; text-shadow: 1px 1px 0 #17388c; }
.wbtns { margin-left: auto; display: flex; gap: 3px; padding-right: 1px; }
.wb { width: 20px; height: 20px; border: 1px solid #a9cdf3; border-radius: 3px; background: linear-gradient(135deg, #6ba6ea, #2f62c2); }
.wb svg { display: block; width: 18px; height: 18px; }
.wb.red { background: linear-gradient(135deg, #e89078, #d84020 60%, #c03818); border-color: #f0c8bc; }

.menu { height: 24px; flex: none; display: flex; align-items: center; gap: 16px; padding-left: 1px; }
.menu .i { margin: -2px -8px 0 0; }
.mdi { width: 44px; height: 12px; margin: 0 4px 0 auto; }

.tools { height: 24px; flex: none; display: flex; align-items: center; padding-left: 4px; background: #eeeeef; }
.sep { width: 1px; height: 21px; background: #a6a4a9; }
.dn { width: 5px; height: 3px; background: #000; clip-path: polygon(0 0, 100% 0, 50% 100%); }
.dn.off { background: #a3a1a5; }

.main { height: 752px; flex: none; display: flex; gap: 2px; }
.side { width: 313px; padding-top: 3px; display: flex; flex-direction: column; }
.side-head { width: 312px; height: 18px; flex: none; display: flex; justify-content: space-between; align-items: center; border: solid #838187; border-width: 1px 1px 1px 0; }
.bar { width: 312px; height: 19px; flex: none; display: flex; justify-content: center; align-items: center; padding-right: 4px; border: solid; border-width: 1px 1px 1px 0; border-color: #fff #a6a4a9 #a6a4a9; }
.side-head + .bar { margin-top: 2px; }
.cur { border-bottom-color: #000; }
.treebox { height: 613px; flex: none; display: flex; background: #fff; border-top: 1px solid #a6a4a9; overflow: hidden; width: 312px; }
.tree { list-style: none; margin: 0; padding: 1px 0 0 15px; width: 294px; }
.tree li { height: 16px; display: flex; align-items: center; }
.tree li > i { width: 19px; height: 16px; position: relative; }
.tree .v, .tree .k { background: repeating-linear-gradient(#a0a0a0 0 1px, transparent 1px 2px) 9px 0/1px 16px no-repeat; }
.tree .k { background: repeating-linear-gradient(#a0a0a0 0 1px, transparent 1px 2px) 9px 0/1px 16px no-repeat, repeating-linear-gradient(90deg, #a0a0a0 0 1px, transparent 1px 2px) 10px 8px/9px 1px no-repeat; }
.tree .l { background-size: 1px 9px, 9px 1px; }
.tree .i { margin: 0 4px 0 1px; }
.tree .b { font-weight: bold; }
.x { position: absolute; left: 5px; top: 4px; width: 9px; height: 9px; border: 1px solid #8c8c8c; background: linear-gradient(#000, #000) center/5px 1px no-repeat, linear-gradient(#000, #000) center/1px 5px no-repeat, #fff; }
.x.m { background: linear-gradient(#000, #000) center/5px 1px no-repeat, #fff; }

.sb { flex: none; width: 16px; height: 17px; background: #ebe9ed; border: 1px solid; border-color: #fff #8a888d #8a888d #fff; box-shadow: inset -1px -1px #c4c2c7; display: flex; flex-direction: column; gap: 1px; align-items: center; justify-content: center; }
.flat { border-left-color: #ebe9ed; }
.up, .down { width: 7px; height: 4px; background: #000; clip-path: polygon(50% 0, 100% 100%, 0 100%); }
.down { clip-path: polygon(0 0, 100% 0, 50% 100%); }
.left, .right { width: 4px; height: 7px; background: #000; clip-path: polygon(0 50%, 100% 0, 100% 100%); }
.right { clip-path: polygon(100% 50%, 0 0, 0 100%); }
.off { background: #a3a1a5; }
.fill { flex: 1; background: repeating-conic-gradient(#e4e2e7 0 25%, #fff 0 50%) 0 0/2px 2px; }
.thumb { background: #ebe9ed; border: solid #a09ea3; border-width: 0 1px 1px 0; }
.vsb { width: 17px; display: flex; flex-direction: column; padding-top: 1px; }
.vsb .a { flex: none; height: 78px; }
.vsb .thumb { height: 174px; }
.hsb { height: 17px; flex: none; width: 312px; padding-right: 20px; display: flex; background: #ebe9ed; }
.hsb .thumb { width: 248px; }
.hsb .sb:first-child { width: 14px; }
.hsb + .bar { margin-top: 2px; }

.work { width: 1117px; display: flex; flex-direction: column; }
.tabs { height: 22px; flex: none; display: flex; align-items: flex-end; padding-left: 1px; }
.tab { height: 18px; width: 51px; padding: 2px 0 0 4px; border: 1px solid #fff; }
.tab.on { width: 225px; height: 21px; padding: 3px 0 0 5px; border-color: #fff #838187 #ebe9ed #fff; }
.tabline { flex: 1; height: 1px; background: #fff; }
.rtools { height: 25px; flex: none; margin: 4px 2px 0 3px; display: flex; align-items: center; padding-left: 2px; background: #eeeeef; border-radius: 3px 3px 0 0; }
.grip { width: 3px; height: 16px; background: repeating-linear-gradient(#a6a4a9 0 1px, transparent 1px 3px); margin-left: 1px; }
.combo { width: 211px; height: 20px; background: #fff; display: flex; align-items: center; padding-left: 1px; }
.combo .t { margin-left: 2px; }
.cbtn { width: 10px; height: 18px; margin-left: 2px; background: #eeeeef; padding: 8px 0 0 2px; }
.viewer { height: 646px; flex: none; margin: 0 2px 0 3px; border: 1px solid #2c5ca8; display: flex; flex-direction: column; }
.vtools { height: 35px; flex: none; display: flex; align-items: center; padding: 5px 0 0 8px; border-top: 2px solid #a09ea3; border-bottom: 1px solid #8a888d; box-shadow: inset 1px 1px #fff; margin: 0 3px 0 1px; }
.vtools .t { padding-top: 3px; }
.canvas { height: 588px; flex: none; margin: 0 3px 0 1px; background: #808080; display: flex; justify-content: space-between; padding-left: 167px; border-top: 1px solid #6c6c6c; }
.rsb { width: 17px; display: flex; flex-direction: column; background: #ebe9ed; border-right: 1px solid #fff; }
.vfoot { height: 21px; flex: none; display: flex; padding: 2px 18px 2px 1px; background: #ebe9ed; border-top: 1px solid #fff; }
.vfoot .pg { width: 77px; border: solid #a6a4a9; border-width: 1px 1px 0 0; padding: 1px 0 0 3px; margin-right: 2px; height: 17px; }

.paper { width: 758px; height: 577px; margin-top: 10px; background: #fff; border: solid #000; border-width: 1px 2px 0 1px; font: 9px/11px "Liberation Sans", Arial, sans-serif; overflow: hidden; }
.ha { height: 73px; display: flex; padding-left: 64px; }
.barcode { width: 101px; margin-top: 44px; display: flex; flex-direction: column; align-items: center; height: 44px; }
.num { font: 11.500px/14px "Liberation Mono", monospace; margin-top: 3px; white-space: nowrap; flex: none; }
h1 { width: 200px; margin: 44px 0 0 121px; text-align: center; font: bold 12px/14px "Liberation Sans", sans-serif; height: 28px; }
.form { margin: 41px 0 0 15px; white-space: nowrap; }
.hb { height: 64px; display: flex; padding-left: 72px; }
.org { width: 66px; margin-top: 40px; }
.orgline { width: 395px; height: 52px; border-bottom: 1px solid #000; padding-left: 33px; display: flex; align-items: flex-end; justify-content: center; font-size: 11.500px; line-height: 12px; }
.okl { width: 80px; padding: 23px 5px 0 0; display: flex; flex-direction: column; align-items: flex-end; gap: 6px; white-space: nowrap; }
.codes { width: 97px; height: 54px; display: grid; grid-template-rows: 17px 18px 19px; border: solid #000; border-width: 0 1px 1px 0; text-align: center; }
.codes div { border: solid #000; border-width: 1px 0 0 1px; padding-top: 4px; }
.g1, .g2 { display: grid; border-right: 1px solid #000; text-align: center; }
.g1 > div, .g2 > div { border: solid #000; border-width: 1px 0 0 1px; padding: 2px 1px 0 0; display: flex; align-items: center; justify-content: center; white-space: nowrap; overflow: hidden; min-width: 0; min-height: 0; }
.g1 { width: 589px; margin-left: 114px; grid-template: 20px 48px 19px / 50px 51px 79px 77px 76px 77px 48px 77px 53px; }
.g2 { width: 667px; margin-left: 53px; grid-template: 23px 48px 18px 24px / 40px 44px 180px 80px 37px 43px 40px 40px 52px 60px 50px; border-bottom: 1px solid #000; }
.r2 { grid-row: span 2; }
.c2 { grid-column: span 2; }
.g1 > .th { border-top-width: 3px; border-bottom-width: 2px; padding-top: 0; }
.g1 > .th:last-child { border-right-width: 1px; }
.g2 > .d { padding-top: 0; }
.g2 > .rt { justify-content: flex-end; padding-right: 3px; }
.g2 > .lf { flex-direction: column; align-items: flex-start; padding-left: 1px; }
.via { display: flex; height: 16px; padding: 4px 0 0 72px; }
.via .u1 { width: 533px; height: 12px; border-bottom: 1px solid #000; }
.l1 { width: 83px; }
.two { height: 32px; padding: 5px 0 0 73px; }
.l2 { width: 56px; } .l3 { width: 73px; padding-left: 4px; white-space: nowrap; }
.two .u2, .two .u3 { height: 10px; border-bottom: 1px solid #000; width: 264px; }
.two .u3 { width: 222px; }
.sign { display: grid; grid-template-columns: 44px 233px 149px 188px; padding-left: 67px; height: 29px; padding-top: 11px; white-space: nowrap; }
.sign span { text-align: center; }
.sign .s0 { text-align: left; }
.s1, .s2, .s3 { margin-top: 8px; border-top: 1px solid #000; height: 9px; line-height: 9px; overflow: hidden; }
.s1 { padding-right: 17px; } .s2 { margin-left: 7px; margin-right: -7px; padding-left: 11px; } .s3 { margin-left: 22px; margin-right: -22px; }
.second { padding-left: 69px; }
.second .s3 { margin-left: 20px; margin-right: -20px; }

.btabs { height: 26px; flex: none; margin: 0 2px 0 3px; border-top: 2px solid #c4d2e8; padding-bottom: 2px; display: flex; align-items: center; background: linear-gradient(#fff, #ebe9ed); outline: 1px solid #2c5ca8; outline-offset: -1px; }
.btabs .first { margin-left: 9px; }
.bs { width: 1px; height: 16px; background: #a6a4a9; margin: 0 5px 0 4px; }
.cl { width: 14px; height: 15px; margin-left: 7px; background: linear-gradient(#f06050, #a01010); border: 1px solid #e89080; flex: none; }
.cl svg { display: block; width: 12px; height: 13px; }
.bt { width: 174px; height: 21px; margin: -1px 0 0 4px; padding-left: 2px; display: flex; align-items: center; background: #bfcfe8; border: 1px solid #2c5ca8; border-top: 0; }
.cells { display: flex; gap: 2px; padding: 4px 6px 0 6px; height: 28px; border-bottom: 1px solid #a6a4a9; flex: 1; }
.cells > span { height: 18px; border: 1px solid #a6a4a9; padding: 2px 0 0 2px; flex: none; width: 127px; }
.cells > span:nth-child(2) { width: 53px; }
.cells > span:nth-child(3) { flex: 1; }

.task { height: 26px; flex: none; display: flex; align-items: center; overflow: hidden; }
.task > span { height: 22px; flex: none; display: flex; align-items: center; gap: 3px; padding-left: 5px; border-right: 1px solid #a6a4a9; }
.task .k0 { width: 92px; padding-left: 0; } .task .k0 .i { margin-left: -4px; }
.k1 { width: 163px; } .k2 { width: 164px; } .k3 { width: 165px; } .k4 { width: 121px; } .k5 { width: 114px; } .k6 { width: 129px; } .k7 { width: 155px; } .k8 { width: 160px; }
.task .k4 { padding-left: 5px; }
.task .k6, .task .k7, .task .k8 { padding-left: 4px; }
.task .k8 { border-right: 0; }
.task .k9 { width: 160px; margin-left: 1px; border: 1px solid #2c5ca8; background: #d6dae3; padding-left: 3px; }
.status { height: 19px; flex: none; display: flex; gap: 2px; border-bottom: 2px solid #2c5ca8; }
.status > span { border: 1px solid #a6a4a9; flex: none; display: flex; align-items: center; padding-left: 2px; }
.status .q0 { width: 1031px; border-left: 0; padding-left: 0; overflow: hidden; } .q0 .i { margin-left: -4px; }
.q1 { width: 102px; } .q2 { width: 32px; } .q3 { width: 29px; } .q4 { width: 31px; } .q5 { width: 27px; } .q6 { width: 168px; gap: 3px; }
.status .q6 { padding-left: 0; border-right: 0; }
```
FILE: fit.js
```js
// Tracks each label to its nominal width so that columns stay aligned with any installed font.
document.querySelectorAll('.t[data-w]').forEach(function (el) {
  var w = Number(el.dataset.w);
  var n = el.textContent.length;
  el.style.letterSpacing = ((w - el.getBoundingClientRect().width) / n).toFixed(3) + 'px';
  el.style.width = w + 'px';
});
```
